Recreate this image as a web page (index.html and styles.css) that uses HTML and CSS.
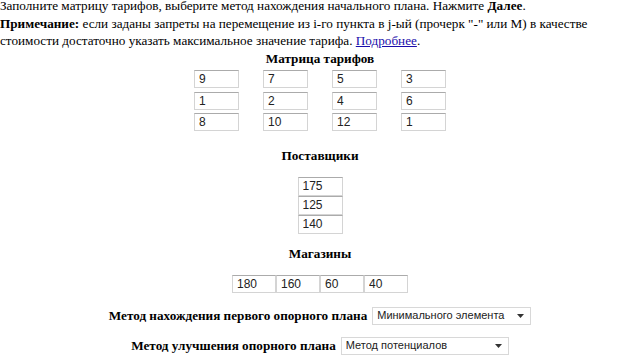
FILE: index.html
```html
<!DOCTYPE html>
<html lang="ru">
<head>
  <meta charset="UTF-8">
  <title>Транспортная задача</title>
  <link rel="stylesheet" href="styles.css">
</head>
<body>
  <div class="intro">
    Заполните матрицу тарифов, выберите метод нахождения начального плана. Нажмите <b>Далее</b>.<br>
    <b>Примечание:</b> если заданы запреты на перемещение из i-го пункта в j-ый (прочерк "-" или M) в качестве<br>
    стоимости достаточно указать максимальное значение тарифа. <a href="#">Подробнее</a>.
  </div>

  <div class="title">Матрица тарифов</div>
  <div class="matrix">
    <input type="text" value="9"><input type="text" value="7"><input type="text" value="5"><input type="text" value="3">
    <input type="text" value="1"><input type="text" value="2"><input type="text" value="4"><input type="text" value="6">
    <input type="text" value="8"><input type="text" value="10"><input type="text" value="12"><input type="text" value="1">
  </div>

  <div class="title section">Поставщики</div>
  <div class="suppliers">
    <input type="text" value="175">
    <input type="text" value="125">
    <input type="text" value="140">
  </div>

  <div class="title section stores-title">Магазины</div>
  <div class="stores">
    <input type="text" value="180"><input type="text" value="160"><input type="text" value="60"><input type="text" value="40">
  </div>

  <div class="method first">
    <b>Метод нахождения первого опорного плана</b>
    <div class="select wide">
      <span>Минимального элемента</span>
      <svg width="7" height="4" viewBox="0 0 7 4"><path d="M0 0h7L3.5 4z" fill="#333"/></svg>
    </div>
  </div>

  <div class="method">
    <b>Метод улучшения опорного плана</b>
    <div class="select wider">
      <span>Метод потенциалов</span>
      <svg width="7" height="4" viewBox="0 0 7 4"><path d="M0 0h7L3.5 4z" fill="#333"/></svg>
    </div>
  </div>
</body>
</html>
```

FILE: styles.css
```css
* {
  box-sizing: border-box;
}

body {
  margin: 0;
  background-color: #fff;
  color: #000;
  font-family: 'Liberation Serif', 'Times New Roman', serif;
  font-size: 13.2px;
  line-height: 17.5px;
  overflow: hidden;
}

.intro {
  margin-top: -3px;
}

.intro a {
  color: #1a0dab;
}

.title {
  text-align: center;
  font-weight: bold;
}

.title.section {
  margin-top: 16px;
}

.title.stores-title {
  margin-top: 11px;
}

input[type="text"] {
  width: 45px;
  height: 18px;
  margin: 0;
  padding: 0 4px;
  border: 1px solid #d4d4d4;
  border-top-color: #ababab;
  font-family: 'Liberation Sans', Arial, sans-serif;
  font-size: 12px;
  color: #222;
  background: #fff;
}

.matrix {
  display: grid;
  grid-template-columns: repeat(4, 45px);
  column-gap: 24px;
  row-gap: 3.5px;
  justify-content: center;
  margin-top: 3px;
}

.suppliers {
  display: flex;
  flex-direction: column;
  align-items: center;
  margin-top: 12px;
}

.suppliers input {
  height: 19px;
}

.stores {
  display: flex;
  justify-content: center;
  margin-top: 13px;
}

.stores input {
  width: 44px;
}

.method {
  display: flex;
  justify-content: center;
  align-items: center;
  gap: 5px;
  margin-top: 12px;
}

.method.first {
  margin-top: 14px;
}

.select {
  display: flex;
  align-items: center;
  justify-content: space-between;
  height: 18px;
  padding: 0 6px 0 4px;
  border: 1px solid #d8d8d8;
  background: #fff;
  font-family: 'Liberation Sans', Arial, sans-serif;
  font-size: 11px;
  color: #222;
  white-space: nowrap;
}

.select.wide {
  width: 159px;
}

.select.wider {
  width: 168px;
}
```
